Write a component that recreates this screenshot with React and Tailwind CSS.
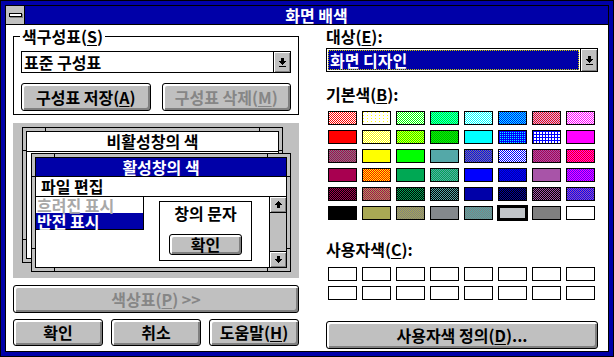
import React from 'react';

const BASIC = [
  'bg-[image:repeating-conic-gradient(#ff0000_0_25%,#ffffff_0_50%)] bg-[length:2px_2px]',
  'bg-[#ffff00] bg-[image:linear-gradient(90deg,transparent_1px,#ffffff_1px),linear-gradient(transparent_1px,#ffffff_1px)] bg-[length:4px_3px]',
  'bg-[image:repeating-conic-gradient(#00ff00_0_25%,#ffffff_0_50%)] bg-[length:2px_2px]',
  'bg-[image:repeating-conic-gradient(#00ff00_0_25%,#00ffff_0_50%)] bg-[length:2px_2px]',
  'bg-[image:repeating-conic-gradient(#00ffff_0_25%,#ffffff_0_50%)] bg-[length:2px_2px]',
  'bg-[image:repeating-conic-gradient(#0000ff_0_25%,#00ffff_0_50%)] bg-[length:2px_2px]',
  'bg-[image:repeating-conic-gradient(#ff0000_0_25%,#c0c0ff_0_50%)] bg-[length:2px_2px]',
  'bg-[image:repeating-conic-gradient(#ff00ff_0_25%,#ffffff_0_50%)] bg-[length:2px_2px]',

  'bg-[#ff0000]',
  'bg-[image:repeating-conic-gradient(#ffff00_0_25%,#ffffff_0_50%)] bg-[length:2px_2px]',
  'bg-[image:repeating-conic-gradient(#ffff00_0_25%,#00ff00_0_50%)] bg-[length:2px_2px]',
  'bg-[image:repeating-conic-gradient(#00ff00_0_25%,#00a800_0_50%)] bg-[length:2px_2px]',
  'bg-[#00ffff]',
  'bg-[#00ffff] bg-[image:linear-gradient(90deg,#0000ff_1px,transparent_1px),linear-gradient(#0000ff_1px,transparent_1px)] bg-[length:2px_2px]',
  'bg-white bg-[image:linear-gradient(90deg,#0000ff_1px,transparent_1px),linear-gradient(#0000ff_1px,transparent_1px)] bg-[length:3px_3px]',
  'bg-[#ff00ff]',

  'bg-[image:repeating-conic-gradient(#a80050_0_25%,#808080_0_50%)] bg-[length:2px_2px]',
  'bg-[#ffff00]',
  'bg-[#00ff00]',
  'bg-[#54a8a8]',
  'bg-[image:repeating-conic-gradient(#0000ff_0_25%,#808080_0_50%)] bg-[length:2px_2px]',
  'bg-[image:repeating-conic-gradient(#0000ff_0_25%,#ffffff_0_50%)] bg-[length:2px_2px]',
  'bg-[image:repeating-conic-gradient(#a80050_0_25%,#a854a8_0_50%)] bg-[length:2px_2px]',
  'bg-[image:repeating-conic-gradient(#ff0000_0_25%,#ff00ff_0_50%)] bg-[length:2px_2px]',

  'bg-[#a80050]',
  'bg-[image:repeating-conic-gradient(#ff0000_0_25%,#ffff00_0_50%)] bg-[length:2px_2px]',
  'bg-[#00a854]',
  'bg-[image:repeating-conic-gradient(#00a854_0_25%,#54a8a8_0_50%)] bg-[length:2px_2px]',
  'bg-[#0000ff]',
  'bg-[image:repeating-conic-gradient(#0000a8_0_25%,#0000ff_0_50%)] bg-[length:2px_2px]',
  'bg-[#a854a8]',
  'bg-[image:repeating-conic-gradient(#ff00ff_0_25%,#5400ff_0_50%)] bg-[length:2px_2px]',

  'bg-[image:repeating-conic-gradient(#a80050_0_25%,#000000_0_50%)] bg-[length:2px_2px]',
  'bg-[image:repeating-conic-gradient(#a80050_0_25%,#a8a854_0_50%)] bg-[length:2px_2px]',
  'bg-[image:repeating-conic-gradient(#00a854_0_25%,#000000_0_50%)] bg-[length:2px_2px]',
  'bg-[image:repeating-conic-gradient(#54a8a8_0_25%,#000000_0_50%)] bg-[length:2px_2px]',
  'bg-[#0000a8]',
  'bg-[image:repeating-conic-gradient(#0000a8_0_25%,#000000_0_50%)] bg-[length:2px_2px]',
  'bg-[image:repeating-conic-gradient(#a854a8_0_25%,#000000_0_50%)] bg-[length:2px_2px]',
  'bg-[image:repeating-conic-gradient(#0000ff_0_25%,#a854a8_0_50%)] bg-[length:2px_2px]',

  'bg-black',
  'bg-[#a8a854]',
  'bg-[image:repeating-conic-gradient(#a8a854_0_25%,#808080_0_50%)] bg-[length:2px_2px]',
  'bg-[#84888c]',
  'bg-[image:repeating-conic-gradient(#54a8a8_0_25%,#808080_0_50%)] bg-[length:2px_2px]',
  'bg-[#c0c4c8] border-2 ring-1 ring-black',
  'bg-[#808080]',
  'bg-white',
];

const Button = ({ children, className = '', disabled }) => (
  <div
    className={`flex items-center justify-center border border-black rounded-[3px] bg-[#c0c0c0] shadow-[inset_2px_2px_0_#ffffff,inset_-2px_-2px_0_#808080] ${
      disabled ? 'text-[#868686]' : 'text-black'
    } ${className}`}
  >
    {children}
  </div>
);

const Key = ({ k }) => (
  <>
    (<span className="underline underline-offset-2">{k}</span>)
  </>
);

const ComboArrow = () => (
  <svg width="7" height="9" viewBox="0 0 7 9" shapeRendering="crispEdges">
    <rect x="2" y="0" width="3" height="3" fill="#000" />
    <rect x="0" y="3" width="7" height="1" fill="#000" />
    <rect x="1" y="4" width="5" height="1" fill="#000" />
    <rect x="2" y="5" width="3" height="1" fill="#000" />
    <rect x="3" y="6" width="1" height="1" fill="#000" />
    <rect x="0" y="8" width="7" height="1" fill="#000" />
  </svg>
);

const ScrollArrow = ({ up }) => (
  <svg width="7" height="7" viewBox="0 0 7 7" shapeRendering="crispEdges" className={up ? '' : 'rotate-180'}>
    <rect x="3" y="0" width="1" height="1" fill="#000" />
    <rect x="2" y="1" width="3" height="1" fill="#000" />
    <rect x="1" y="2" width="5" height="1" fill="#000" />
    <rect x="0" y="3" width="7" height="1" fill="#000" />
    <rect x="2" y="4" width="3" height="3" fill="#000" />
  </svg>
);

const DropBtn = () => (
  <div className="w-[17px] border-l border-black bg-[#c0c0c0] shadow-[inset_1px_1px_0_#ffffff,inset_-1px_-1px_0_#808080] flex items-center justify-center">
    <ComboArrow />
  </div>
);

// 미리보기 창 테두리 (Win 3.1 크기 조절 테두리)
const Frame = ({ className, children }) => (
  <div className={`absolute flex border border-black bg-[#c0c0c0] p-[3px] ${className}`}>
    <div className="absolute left-[22px] top-0 w-px h-[4px] bg-black" />
    <div className="absolute right-[22px] top-0 w-px h-[4px] bg-black" />
    <div className="absolute left-[22px] bottom-0 w-px h-[4px] bg-black" />
    <div className="absolute right-[22px] bottom-0 w-px h-[4px] bg-black" />
    <div className="absolute top-[22px] left-0 h-px w-[4px] bg-black" />
    <div className="absolute bottom-[22px] left-0 h-px w-[4px] bg-black" />
    <div className="absolute top-[22px] right-0 h-px w-[4px] bg-black" />
    <div className="absolute bottom-[22px] right-0 h-px w-[4px] bg-black" />
    <div className="flex-1 flex flex-col border border-black bg-white">{children}</div>
  </div>
);

const Preview = () => (
  <div className="relative h-[155px] mt-[8px] bg-[#c0c0c0] overflow-hidden">
    <Frame className="left-[9px] top-[4px] w-[261px] h-[136px]">
      <div className="h-[20px] border-b border-black flex items-center justify-center">비활성창의 색</div>
    </Frame>
    <Frame className="left-[18px] top-[30px] w-[260px] h-[119px]">
      <div className="h-[19px] shrink-0 bg-[#0000a8] text-white border-b border-black flex items-center justify-center">
        활성창의 색
      </div>
      <div className="h-[20px] shrink-0 border-b border-black flex items-center pl-[5px]">파일 편집</div>
      <div className="relative flex-1">
        <div className="absolute left-0 top-0 w-[108px] border-r border-b border-black bg-white">
          <div className="h-[16px] flex items-center text-[#a8a8a8] pl-[1px]">흐려진 표시</div>
          <div className="h-[16px] flex items-center bg-[#0000a8] text-white pl-[1px]">반전 표시</div>
        </div>
        <div className="absolute left-[123px] top-[4px] w-[93px] h-[60px] border border-black flex flex-col items-center">
          <div className="mt-[3px] leading-[17px]">창의 문자</div>
          <Button className="mt-[12px] w-[73px] h-[21px]">확인</Button>
        </div>
        <div className="absolute right-0 top-0 bottom-0 w-[17px] border-l border-black bg-[#c0c0c0] flex flex-col justify-between">
          <div className="h-[16px] border-b border-black shadow-[inset_1px_1px_0_#ffffff,inset_-1px_-1px_0_#808080] flex items-center justify-center">
            <ScrollArrow up />
          </div>
          <div className="h-[16px] border-t border-black shadow-[inset_1px_1px_0_#ffffff,inset_-1px_-1px_0_#808080] flex items-center justify-center">
            <ScrollArrow />
          </div>
        </div>
      </div>
    </Frame>
  </div>
);

export default function App() {
  return (
    <div className="w-[614px] h-[357px] flex bg-[#0000a8] border border-black p-[4px] font-['Noto_Sans_CJK_KR','Noto_Sans',sans-serif] text-[16px] leading-[17px] font-semibold text-black">
      <div className="flex-1 flex flex-col border border-black bg-white">
        <div className="h-[19px] shrink-0 flex border-b border-black">
          <div className="w-[19px] bg-[#c0c0c0] border-r border-black flex items-center justify-center">
            <div className="w-[13px] h-[4px] bg-white border border-black shadow-[1px_1px_0_#808080]" />
          </div>
          <div className="flex-1 bg-[#0000a8] text-white flex items-center justify-center">화면 배색</div>
        </div>

        <div className="flex-1 flex gap-[27px] pl-[7px] pt-[3px]">
          {/* 왼쪽 */}
          <div className="w-[286px] flex flex-col">
            <fieldset className="border border-black px-[7px] pt-[6px] pb-[3px]">
              <legend className="-ml-px px-[2px] leading-[17px]">
                색구성표<Key k="S" />
              </legend>
              <div className="h-[22px] flex border border-black">
                <div className="flex-1 flex items-center pl-[2px]">표준 구성표</div>
                <DropBtn />
              </div>
              <div className="grid grid-cols-2 gap-[11px] mt-[10px]">
                <Button className="h-[28px]">
                  구성표 저장<Key k="A" />
                </Button>
                <Button className="h-[28px]" disabled>
                  구성표 삭제<Key k="M" />
                </Button>
              </div>
            </fieldset>

            <Preview />

            <Button className="h-[28px] mt-[7px]" disabled>
              색상표<Key k="P" /> &gt;&gt;
            </Button>

            <div className="grid grid-cols-3 gap-[8px] mt-[6px]">
              <Button className="h-[27px]">확인</Button>
              <Button className="h-[27px]">취소</Button>
              <Button className="h-[27px]">
                도움말<Key k="H" />
              </Button>
            </div>
          </div>

          {/* 오른쪽 */}
          <div className="w-[272px] flex flex-col">
            <div className="leading-[17px]">
              대상<Key k="E" />:
            </div>
            <div className="h-[24px] mt-[3px] flex border border-black">
              <div className="flex-1 p-[1px]">
                <div className="h-full bg-[#0000a8] text-white flex items-center pl-[2px] outline-1 outline-dotted outline-[#c8c800] -outline-offset-1">
                  화면 디자인
                </div>
              </div>
              <DropBtn />
            </div>

            <div className="mt-[14px] leading-[17px]">
              기본색<Key k="B" />:
            </div>
            <div className="mt-[8px] ml-[2px] grid grid-cols-[repeat(8,29px)] gap-x-[5px] gap-y-[5px]">
              {BASIC.map((c, i) => (
                <div key={i} className={`h-[14px] border border-black ${c}`} />
              ))}
            </div>

            <div className="mt-[21px] leading-[17px]">
              사용자색<Key k="C" />:
            </div>
            <div className="mt-[9px] ml-[2px] grid grid-cols-[repeat(8,29px)] gap-x-[5px] gap-y-[5px]">
              {Array.from({ length: 16 }).map((_, i) => (
                <div key={i} className="h-[14px] border border-black bg-white" />
              ))}
            </div>

            <Button className="h-[28px] mt-[21px]">
              사용자색 정의<Key k="D" />...
            </Button>
          </div>
        </div>
      </div>
    </div>
  );
}
